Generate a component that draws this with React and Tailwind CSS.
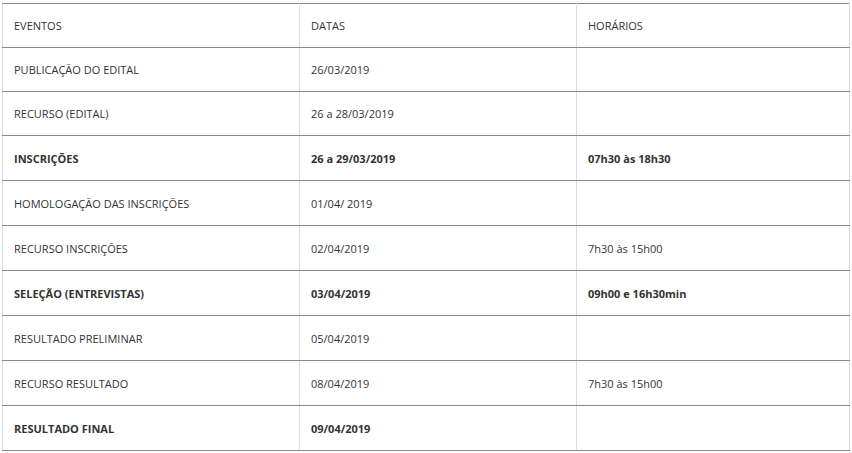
const rows = [
  { ev: 'PUBLICAÇÃO DO EDITAL', data: '26/03/2019', hora: '' },
  { ev: 'RECURSO (EDITAL)', data: '26 a 28/03/2019', hora: '' },
  { ev: 'INSCRIÇÕES', data: '26 a 29/03/2019', hora: '07h30 às 18h30', bold: true },
  { ev: 'HOMOLOGAÇÃO DAS INSCRIÇÕES', data: '01/04/ 2019', hora: '' },
  { ev: 'RECURSO INSCRIÇÕES', data: '02/04/2019', hora: '7h30 às 15h00' },
  { ev: 'SELEÇÃO (ENTREVISTAS)', data: '03/04/2019', hora: '09h00 e 16h30min', bold: true },
  { ev: 'RESULTADO PRELIMINAR', data: '05/04/2019', hora: '' },
  { ev: 'RECURSO RESULTADO', data: '08/04/2019', hora: '7h30 às 15h00' },
  { ev: 'RESULTADO FINAL', data: '09/04/2019', hora: '', bold: true },
]

const cell = 'border-x border-x-[#dcdcdc] border-y border-y-[#8a8a8a] pl-[11px] pr-3 pt-[2px] align-middle text-left'

const App = () => {
  return (
    <div className="w-[852px] h-[453px] bg-white pt-[3px] pl-[2px] text-[11px] text-[#333] font-['Open_Sans',sans-serif]">
      <table className="border-collapse table-fixed w-[847px]">
        <colgroup>
          <col className="w-[297px]" />
          <col className="w-[277px]" />
          <col className="w-[273px]" />
        </colgroup>
        <thead>
          <tr className="h-[44px]">
            <th className={`${cell} font-normal`}>EVENTOS</th>
            <th className={`${cell} font-normal`}>DATAS</th>
            <th className={`${cell} font-normal`}>HORÁRIOS</th>
          </tr>
        </thead>
        <tbody>
          {rows.map((r, i) => (
            <tr key={r.ev} className={`${i < 2 ? 'h-[44px]' : 'h-[45px]'} ${r.bold ? 'font-bold' : ''}`}>
              <td className={cell}>{r.ev}</td>
              <td className={cell}>{r.data}</td>
              <td className={cell}>{r.hora}</td>
            </tr>
          ))}
        </tbody>
      </table>
    </div>
  )
}

export default App
